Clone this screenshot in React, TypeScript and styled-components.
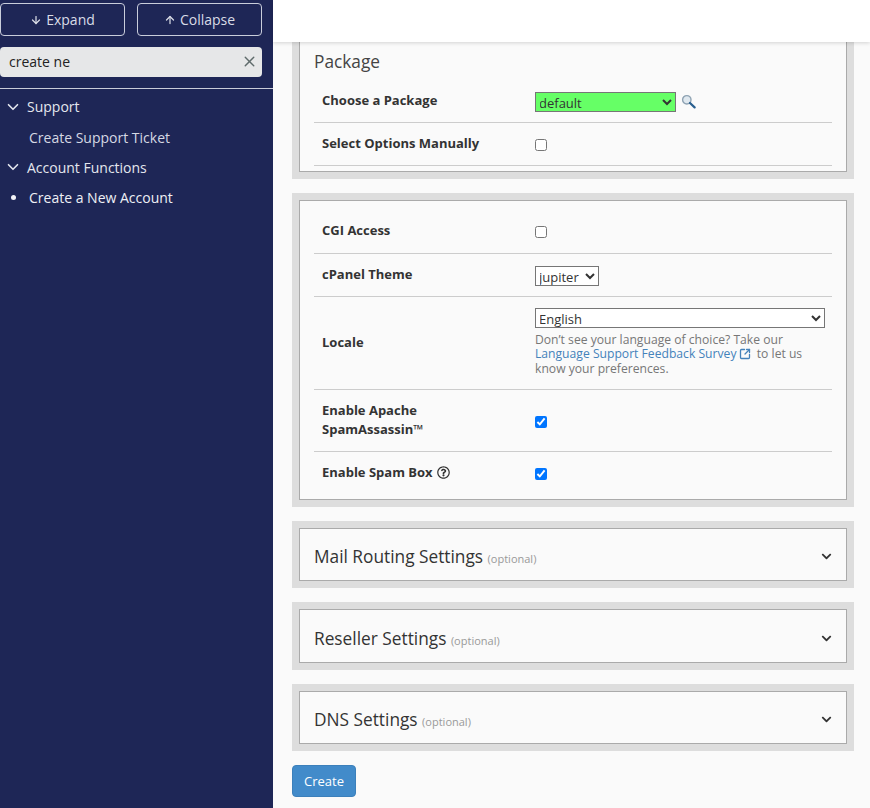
import { createGlobalStyle, styled } from "styled-components";
import { FaChevronDown, FaRegQuestionCircle } from "react-icons/fa";
import { ArrowDown, ArrowUp, ChevronDown, SquareArrowOutUpRight, X } from "lucide-react";

const GlobalStyle = createGlobalStyle`
  html, body {
    margin: 0;
    height: 100%;
    overflow: hidden;
    background: #fafafa;
    font-family: "Open Sans", "Noto Sans", sans-serif;
    font-size: 14px;
    color: #333;
  }
  * { box-sizing: border-box; }
`;

const Page = styled.div`
  display: flex;
  width: 870px;
  height: 808px;
  overflow: hidden;
`;

const Sidebar = styled.aside`
  flex: 0 0 273px;
  background: #1e2656;
  color: #e4e6ee;
`;

const SideTop = styled.div`
  padding: 3px 11px 11px 0;
  border-bottom: 1px solid #c8cbd8;
`;

const ButtonRow = styled.div`
  display: flex;
  gap: 12px;
  margin-bottom: 11px;
`;

const OutlineButton = styled.button`
  flex: 1;
  height: 33px;
  display: flex;
  align-items: center;
  justify-content: center;
  gap: 4px;
  background: transparent;
  border: 1px solid #c9cddb;
  border-radius: 4px;
  color: #d9dce6;
  font: 14px "Open Sans", sans-serif;
`;

const SearchBox = styled.div`
  height: 30px;
  display: flex;
  align-items: center;
  justify-content: space-between;
  padding: 0 4px 2px 9px;
  background: #e6e7e8;
  border-radius: 4px;
  color: #222;
  font-size: 14px;
`;

const Nav = styled.nav`
  padding-top: 2px;
`;

const NavGroup = styled.div`
  height: 30px;
  display: flex;
  align-items: center;
  gap: 5px;
  padding-left: 4px;
  font-size: 14px;
  &:first-child {
    height: 31px;
  }
`;

const NavItem = styled.div<{ $active?: boolean }>`
  height: 30px;
  display: flex;
  align-items: center;
  padding-left: 29px;
  position: relative;
  font-size: 14px;
  color: ${(p) => (p.$active ? "#eef0f5" : "#d5d8e3")};
  &::before {
    content: "";
    display: ${(p) => (p.$active ? "block" : "none")};
    position: absolute;
    left: 11px;
    top: 13px;
    width: 5px;
    height: 5px;
    border-radius: 50%;
    background: #f2f3f7;
  }
`;

const Main = styled.div`
  flex: 1;
  min-width: 0;
  display: flex;
  flex-direction: column;
`;

const TopBar = styled.header`
  flex: 0 0 42px;
  background: #fff;
  box-shadow: 0 1px 4px rgba(0, 0, 0, 0.16);
  position: relative;
  z-index: 2;
`;

const Content = styled.main`
  flex: 1;
  padding: 0 16px 0 19px;
  background: #fafafa;
`;

const Panel = styled.section<{ $cut?: boolean }>`
  border: 7px solid #dddddd;
  border-top-width: ${(p) => (p.$cut ? 0 : 7)}px;
  margin-bottom: 14px;
`;

const PanelInner = styled.div<{ $cut?: boolean; $flush?: boolean }>`
  border: 1px solid #aaaaaa;
  border-top-width: ${(p) => (p.$cut ? 0 : 1)}px;
  padding: ${(p) => (p.$flush ? "0" : "0 14px")};
`;

const SectionTitle = styled.h2`
  margin: 0;
  padding-top: 8px;
  height: 37px;
  font-size: 17.3px;
  line-height: 24px;
  font-weight: 400;
  color: #444;
`;

const Row = styled.div<{ $h: number; $top?: number; $bottom?: number; $plain?: boolean }>`
  min-height: ${(p) => p.$h}px;
  padding: ${(p) => p.$top ?? 0}px 0 ${(p) => p.$bottom ?? 0}px;
  display: grid;
  grid-template-columns: 221px 1fr;
  align-items: center;
  border-bottom: ${(p) => (p.$plain ? "0" : "1px solid #ccc")};
`;

const Label = styled.div`
  padding: 0 0 1px 8px;
  font-weight: 700;
  font-size: 13px;
  line-height: 19px;
  color: #333;
  display: flex;
  align-items: center;
  gap: 4px;
`;

const Value = styled.div`
  padding-top: 2px;
  display: flex;
  align-items: center;
  gap: 5px;
`;

const ValueStack = styled.div`
  padding: 0 7px 2px 0;
`;

const Select = styled.select<{ $w: number; $green?: boolean }>`
  width: ${(p) => p.$w}px;
  height: 20px;
  padding: 0;
  text-indent: -1px;
  background: ${(p) => (p.$green ? "#66ff66" : "#fff")};
  border: 1px solid #767676;
  border-radius: 0;
  color: #333;
  font: 13px "Open Sans", sans-serif;
`;

const Check = styled.input.attrs({ type: "checkbox" })`
  margin: 0 0 0 0;
  width: 12px;
  height: 12px;
`;

const Help = styled.p`
  margin: 5px 0 0;
  font-size: 12.15px;
  line-height: 14.4px;
  color: #777;
`;

const HelpLink = styled.a`
  color: #4482ba;
  text-decoration: none;
`;

const LinkIcon = styled(SquareArrowOutUpRight)`
  vertical-align: -2px;
  margin: 0 3px 0 -1px;
`;

const Accordion = styled.div<{ $h: number }>`
  height: ${(p) => p.$h}px;
  display: flex;
  align-items: center;
  justify-content: space-between;
  padding: 4px 14px 0 14px;
`;

const AccordionTitle = styled.h3`
  margin: 0;
  font-size: 17.3px;
  font-weight: 400;
  color: #333;
`;

const Optional = styled.small`
  font-size: 11px;
  color: #999;
`;

const SubmitButton = styled.button`
  width: 64px;
  height: 32px;
  background: #428bca;
  border: 1px solid #3c80bb;
  border-radius: 4px;
  color: #fff;
  font: 13px "Open Sans", sans-serif;
`;

function SearchIcon() {
  return (
    <svg width="15" height="15" viewBox="0 0 15 15">
      <circle cx="5.8" cy="5.8" r="4.2" fill="#dfe8ef" stroke="#8fa3b3" strokeWidth="1.4" />
      <path d="M9 9l4.6 4.4" stroke="#2a5f8f" strokeWidth="2.2" strokeLinecap="round" />
    </svg>
  );
}

const sections = [
  { title: "Mail Routing Settings", height: 51 },
  { title: "Reseller Settings", height: 52 },
  { title: "DNS Settings", height: 51 },
];

export default function App() {
  return (
    <Page>
      <GlobalStyle />
      <Sidebar>
        <SideTop>
          <ButtonRow>
            <OutlineButton>
              <ArrowDown size={12} strokeWidth={2.5} /> Expand
            </OutlineButton>
            <OutlineButton>
              <ArrowUp size={12} strokeWidth={2.5} /> Collapse
            </OutlineButton>
          </ButtonRow>
          <SearchBox>
            create ne
            <X size={17} color="#5f6b6b" />
          </SearchBox>
        </SideTop>
        <Nav>
          <NavGroup>
            <ChevronDown size={18} strokeWidth={2.2} /> Support
          </NavGroup>
          <NavItem>Create Support Ticket</NavItem>
          <NavGroup>
            <ChevronDown size={18} strokeWidth={2.2} /> Account Functions
          </NavGroup>
          <NavItem $active>Create a New Account</NavItem>
        </Nav>
      </Sidebar>
      <Main>
        <TopBar />
        <Content>
          <Panel $cut>
            <PanelInner $cut>
              <SectionTitle>Package</SectionTitle>
              <Row $h={44}>
                <Label>Choose a Package</Label>
                <Value>
                  <Select $w={141} $green defaultValue="default">
                    <option>default</option>
                  </Select>
                  <SearchIcon />
                </Value>
              </Row>
              <Row $h={43}>
                <Label>Select Options Manually</Label>
                <Value>
                  <Check />
                </Value>
              </Row>
              <div style={{ height: 5 }} />
            </PanelInner>
          </Panel>
          <Panel>
            <PanelInner>
              <Row $h={53} $top={8}>
                <Label>CGI Access</Label>
                <Value>
                  <Check />
                </Value>
              </Row>
              <Row $h={43}>
                <Label>cPanel Theme</Label>
                <Value>
                  <Select $w={64}>
                    <option>jupiter</option>
                  </Select>
                </Value>
              </Row>
              <Row $h={93}>
                <Label>Locale</Label>
                <ValueStack>
                  <Select $w={290}>
                    <option>English</option>
                  </Select>
                  <Help>
                    Don’t see your language of choice? Take our{" "}
                    <HelpLink href="#">
                      Language Support Feedback Survey <LinkIcon size={12} strokeWidth={2.6} />
                    </HelpLink>{" "}
                    to let us know your preferences.
                  </Help>
                </ValueStack>
              </Row>
              <Row $h={62}>
                <Label>
                  <span>
                    Enable Apache
                    <br />
                    SpamAssassin™
                  </span>
                </Label>
                <Value>
                  <Check defaultChecked />
                </Value>
              </Row>
              <Row $h={47} $bottom={6} $plain>
                <Label>
                  Enable Spam Box <FaRegQuestionCircle size={13} />
                </Label>
                <Value>
                  <Check defaultChecked />
                </Value>
              </Row>
            </PanelInner>
          </Panel>
          {sections.map((s) => (
            <Panel key={s.title}>
              <PanelInner $flush>
                <Accordion $h={s.height}>
                  <AccordionTitle>
                    {s.title} <Optional>(optional)</Optional>
                  </AccordionTitle>
                  <FaChevronDown size={11} color="#333" />
                </Accordion>
              </PanelInner>
            </Panel>
          ))}
          <SubmitButton>Create</SubmitButton>
        </Content>
      </Main>
    </Page>
  );
}
